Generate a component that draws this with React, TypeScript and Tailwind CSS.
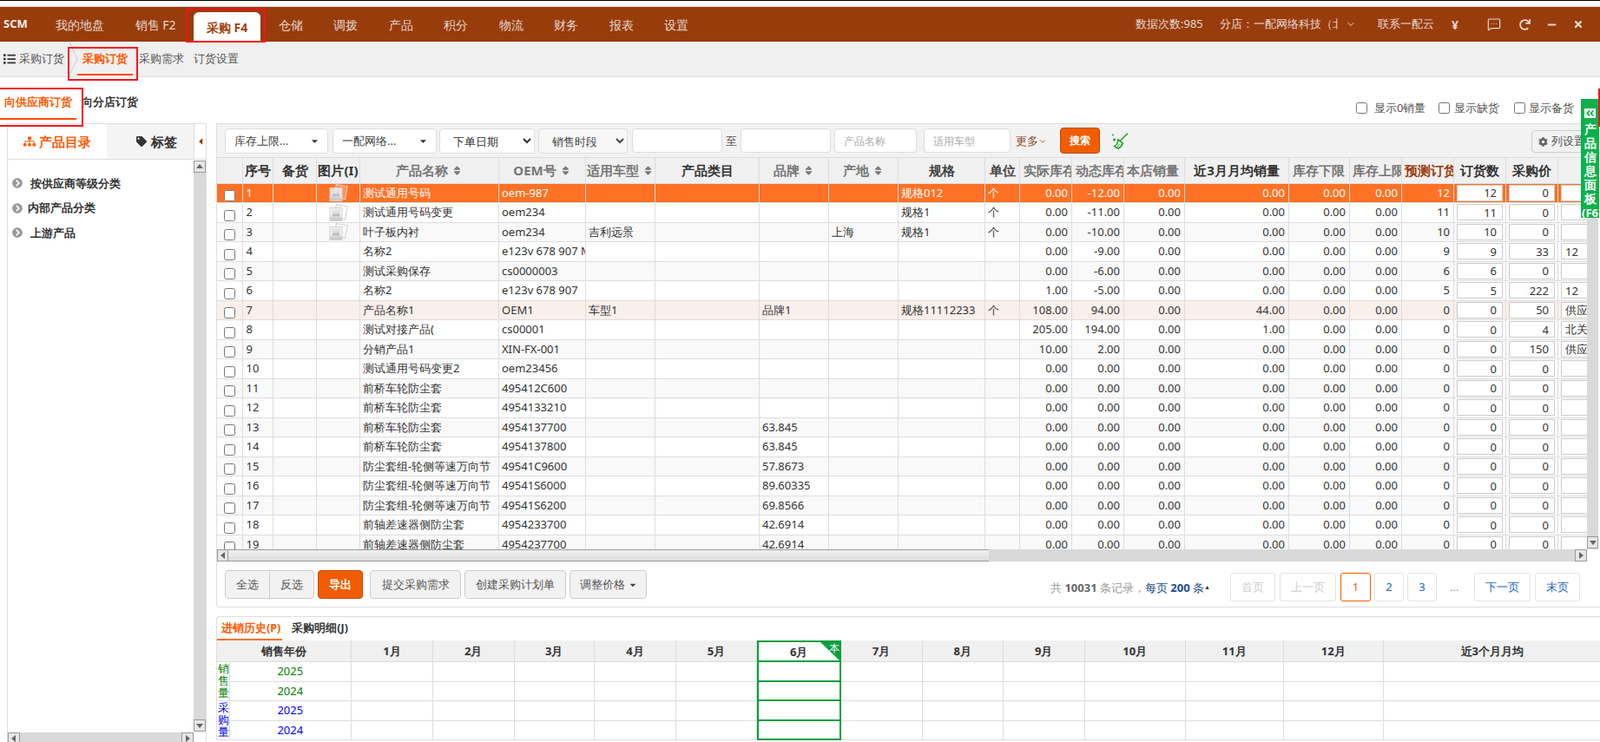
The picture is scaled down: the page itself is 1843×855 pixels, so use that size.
import React from "react";
import { FaCaretDown, FaCaretLeft, FaChevronCircleRight, FaCog, FaList, FaMinus, FaRedo, FaSitemap, FaSort, FaTag, FaTimes, FaAngleDoubleLeft } from "react-icons/fa";
import { ChevronDown, MessageSquareMore } from "lucide-react";

const GRID = "grid w-max grid-cols-[29.5px_35.5px_50px_50px_160px_100px_80px_120px_80px_80px_100px_40px_60px_60px_70px_120px_70px_60px_60px_60px_60px_60px]";
const HIST = "grid grid-cols-[14.5px_140.5px_94px_93.5px_92.5px_94px_93px_96.5px_94px_93.5px_93.5px_116.5px_112.5px_115.5px_249.5px]";

type Row = { name: string; oem?: string; model?: string; brand?: string; origin?: string; spec?: string; unit?: string; actual?: string; dyn?: string; avg?: string; pred?: string; qty?: string; price?: string; extra?: string; img?: boolean };

const rows: Row[] = [
  { name: "测试通用号码", oem: "oem-987", spec: "规格012", unit: "个", dyn: "-12.00", pred: "12", qty: "12", img: true },
  { name: "测试通用号码变更", oem: "oem234", spec: "规格1", unit: "个", dyn: "-11.00", pred: "11", qty: "11", img: true },
  { name: "叶子板内衬", oem: "oem234", model: "吉利远景", origin: "上海", spec: "规格1", unit: "个", dyn: "-10.00", pred: "10", qty: "10", img: true },
  { name: "名称2", oem: "e123v 678 907 M", dyn: "-9.00", pred: "9", qty: "9", price: "33", extra: "12" },
  { name: "测试采购保存", oem: "cs0000003", dyn: "-6.00", pred: "6", qty: "6" },
  { name: "名称2", oem: "e123v 678 907", actual: "1.00", dyn: "-5.00", pred: "5", qty: "5", price: "222", extra: "12" },
  { name: "产品名称1", oem: "OEM1", model: "车型1", brand: "品牌1", spec: "规格11112233", unit: "个", actual: "108.00", dyn: "94.00", avg: "44.00", price: "50", extra: "供应商" },
  { name: "测试对接产品(", oem: "cs00001", actual: "205.00", dyn: "194.00", avg: "1.00", price: "4", extra: "北关区" },
  { name: "分销产品1", oem: "XIN-FX-001", actual: "10.00", dyn: "2.00", price: "150", extra: "供应商" },
  { name: "测试通用号码变更2", oem: "oem23456" },
  { name: "前桥车轮防尘套", oem: "495412C600" },
  { name: "前桥车轮防尘套", oem: "4954133210" },
  { name: "前桥车轮防尘套", oem: "4954137700", brand: "63.845" },
  { name: "前桥车轮防尘套", oem: "4954137800", brand: "63.845" },
  { name: "防尘套组-轮侧等速万向节", oem: "49541C9600", brand: "57.8673" },
  { name: "防尘套组-轮侧等速万向节", oem: "49541S6000", brand: "89.60335" },
  { name: "防尘套组-轮侧等速万向节", oem: "49541S6200", brand: "69.8566" },
  { name: "前轴差速器侧防尘套", oem: "4954233700", brand: "42.6914" },
  { name: "前轴差速器侧防尘套", oem: "4954237700", brand: "42.6914" },
];

const heads: { t: string; sort?: boolean; c: string }[] = [
  { t: "", c: "" },
  { t: "序号", c: "text-center text-[#333]" },
  { t: "备货", c: "text-center text-[#333]" },
  { t: "图片(I)", c: "text-center text-[#333]" },
  { t: "产品名称", sort: true, c: "text-center text-[#777]" },
  { t: "OEM号", sort: true, c: "text-center text-[#777]" },
  { t: "适用车型", sort: true, c: "text-center text-[#777]" },
  { t: "产品类目", c: "text-center text-[#333]" },
  { t: "品牌", sort: true, c: "text-center text-[#777]" },
  { t: "产地", sort: true, c: "text-center text-[#777]" },
  { t: "规格", c: "text-center text-[#444]" },
  { t: "单位", c: "text-center text-[#444]" },
  { t: "实际库存", c: "pl-1 text-left text-[#777]" },
  { t: "动态库存", c: "pl-1 text-left text-[#777]" },
  { t: "本店销量", c: "pl-[3px] text-left text-[#777]" },
  { t: "近3月月均销量", c: "text-center text-[#333]" },
  { t: "库存下限", c: "pl-1 text-left text-[#777]" },
  { t: "库存上限", c: "pl-[3px] text-left text-[#777]" },
  { t: "预测订货", c: "pl-[3px] text-left text-[#9a3c0c]" },
  { t: "订货数", c: "text-center text-[#333]" },
  { t: "采购价", c: "text-center text-[#333]" },
];

const navItems = ["仓储", "调拨", "产品", "积分", "物流", "财务", "报表", "设置"];
const months = ["1月", "2月", "3月", "4月", "5月"];
const months2 = ["7月", "8月", "9月", "10月", "11月", "12月"];

function Arrow({ dir }: { dir: "up" | "down" | "left" | "right" }) {
  const pts = { up: "1,7 9,7 5,2", down: "1,3 9,3 5,8", left: "7,1 7,9 2,5", right: "3,1 3,9 8,5" }[dir];
  return (
    <svg width="10" height="10" viewBox="0 0 10 10">
      <polygon points={pts} fill="#666" />
    </svg>
  );
}

function ScrollBtn({ dir, className }: { dir: "up" | "down" | "left" | "right"; className: string }) {
  return (
    <div className={"absolute flex items-center justify-center border border-[#999] bg-[#e6e6e6] " + className}>
      <Arrow dir={dir} />
    </div>
  );
}

function Pic() {
  return (
    <svg width="23" height="20" viewBox="0 0 23 20">
      <rect x="8" y="1.5" width="13" height="15" transform="rotate(10 14 9)" fill="#ffffff" fillOpacity="0.25" stroke="#d2d2d2" />
      <rect x="2" y="4.5" width="14" height="15" fill="#f2f2f2" fillOpacity="0.8" stroke="#d2d2d2" />
      <rect x="4" y="6.5" width="10" height="8" fill="#e2e2e2" />
      <polygon points="4,14.5 7,10.5 9,12.5 11,10 14,14.5" fill="#bcbcbc" />
      <rect x="2" y="15.5" width="14" height="4" fill="#cccccc" />
    </svg>
  );
}

function Broom() {
  return (
    <svg width="20" height="19" viewBox="0 0 20 19" fill="none" stroke="#22a32e" strokeWidth="1.6" strokeLinecap="round">
      <path d="M18.5 1 L11 8.5" />
      <path d="M8 8 L13.5 12 C12.5 15 10.5 17 8 18 C6.5 17.6 5 16.6 3.8 15.6 C6 14.6 7.5 11.5 8 8 Z" />
      <path d="M9.5 13 L7 16.5" strokeWidth="1" />
      <circle cx="2" cy="2.5" r="1" fill="#22a32e" stroke="none" />
      <circle cx="3.5" cy="8" r="1.6" fill="#22a32e" stroke="none" />
    </svg>
  );
}

function Cell({ children, className = "" }: { children?: React.ReactNode; className?: string }) {
  return <div className={"overflow-hidden whitespace-nowrap border-r border-[#ddd] leading-[21px] " + className}>{children}</div>;
}

function Qty({ v, left }: { v: string; left?: boolean }) {
  return (
    <div className="flex items-center justify-center overflow-hidden border-r border-[#ddd]">
      <input
        readOnly
        value={v}
        className={"h-[19px] border border-[#ccc] bg-white text-[13px] leading-[15px] text-[#333] " + (left ? "ml-[3px] mr-auto w-[56px] pl-1 text-left" : "w-[53px] pr-[6px] text-right")}
      />
    </div>
  );
}

function TableRow({ r, i }: { r: Row; i: number }) {
  const first = i === 0;
  const bg = first ? "bg-[#ff7124] text-white" : i === 6 ? "bg-[#f9efeb] text-[#333]" : i % 2 === 0 ? "bg-[#f9f9f9] text-[#333]" : "bg-white text-[#333]";
  const n = "pr-1 text-right";
  return (
    <div className={GRID + " h-[22.5px] border-b border-[#ddd] text-[13px] " + bg}>
      <div className="flex items-end justify-center overflow-hidden border-r border-[#ddd] pb-px">
        <input type="checkbox" className="h-[13px] w-[13px]" readOnly />
      </div>
      <Cell className="pl-1">{i + 1}</Cell>
      <Cell />
      <div className="flex items-center justify-center overflow-hidden border-r border-[#ddd]">{r.img ? <Pic /> : null}</div>
      <Cell className="pl-[3px]">{r.name}</Cell>
      <Cell className="pl-[3px]">{r.oem}</Cell>
      <Cell className="pl-[3px]">{r.model}</Cell>
      <Cell />
      <Cell className="pl-[3px]">{r.brand}</Cell>
      <Cell className="pl-[3px]">{r.origin}</Cell>
      <Cell className="pl-[3px]">{r.spec}</Cell>
      <Cell className="pl-[3px]">{r.unit}</Cell>
      <Cell className={n}>{r.actual ?? "0.00"}</Cell>
      <Cell className={n}>{r.dyn ?? "0.00"}</Cell>
      <Cell className={n}>0.00</Cell>
      <Cell className={n}>{r.avg ?? "0.00"}</Cell>
      <Cell className={n}>0.00</Cell>
      <Cell className={n}>0.00</Cell>
      <Cell className={n}>{r.pred ?? "0"}</Cell>
      <Qty v={r.qty ?? "0"} />
      <Qty v={r.price ?? "0"} />
      <Qty v={r.extra ?? ""} left />
    </div>
  );
}

function FilterBtn({ label, className }: { label: string; className: string }) {
  return (
    <div className={"relative flex h-[29px] items-center rounded-[4px] border border-[#ddd] bg-white pl-[10px] text-[13px] text-[#444] " + className}>
      {label}
      <FaCaretDown className="absolute right-[9px] top-[8px] text-[#333]" size={11} />
    </div>
  );
}

const footBtn = "flex h-[33px] items-center justify-center border border-[#ccc] bg-[#f2f2f2] text-[13px] text-[#555]";
const pageBtn = "flex h-[33px] items-center justify-center rounded-[3px] border border-[#e4e4e4] bg-white text-[13px]";

function HistRow({ label, color }: { label: string; color: string }) {
  return (
    <>
      <div className={"flex items-center justify-center border-b border-r border-[#ddd] text-[13px] " + color}>{label}</div>
      {months.map((m) => (
        <div key={m} className="border-b border-r border-[#ddd]" />
      ))}
      <div className="border-x-2 border-b-2 border-[#0b9f3e]" />
      {months2.map((m) => (
        <div key={m} className="border-b border-r border-[#ddd]" />
      ))}
      <div className="border-b border-[#ddd]" />
    </>
  );
}

export default function App() {
  return (
    <div className="relative h-[855px] w-[1843px] overflow-hidden bg-white [font-family:'Liberation_Sans','Noto_Sans_CJK_SC',sans-serif]">
      <div className="h-px bg-black" />
      <div className="h-[7px] border-b border-[#ddd] bg-white" />

      {/* top header */}
      <header className="relative flex h-10 items-center bg-[#983c0c] text-[14px] text-[#e4d8cf]">
        <span className="ml-1 w-[60px] text-[13px] font-bold text-[#eee]">SCM</span>
        <div className="flex h-full items-center gap-[35.5px]">
          <span>我的地盘</span>
          <span>销售 F2</span>
          <span className="-mx-[15px] mt-1.5 flex h-[34px] items-center rounded-t-[6px] bg-white px-[15px] font-bold text-[#a0410d]">采购 F4</span>
          {navItems.map((n) => (
            <span key={n}>{n}</span>
          ))}
        </div>
        <div className="absolute left-[1308px] top-0 flex h-full items-center text-[13px]">
          <span className="w-[97px]">数据次数:985</span>
          <span className="w-[136px] overflow-hidden whitespace-nowrap">分店：一配网络科技（北京）</span>
          <ChevronDown size={12} className="ml-[9px]" />
          <span className="ml-[25px]">联系一配云</span>
          <span className="ml-[20px] text-[14px] font-bold">¥</span>
          <MessageSquareMore size={16} strokeWidth={1.8} className="ml-[33px]" />
          <FaRedo size={13} className="ml-[21px]" />
          <FaMinus size={11} className="ml-[19px]" />
          <FaTimes size={12} className="ml-[19px]" />
        </div>
      </header>

      {/* sub nav */}
      <nav className="relative flex h-[41px] items-center border-b border-[#ddd] bg-[#f0f0f0] text-[13px] text-[#555]">
        <FaList size={14} className="ml-1 text-[#333]" />
        <span className="ml-1">采购订货</span>
        <svg width="12" height="41" viewBox="0 0 12 41" className="absolute left-[79px] top-0" fill="none" stroke="#ccc">
          <path d="M0.5 0 L10 20 L0.5 40" />
        </svg>
        <span className="ml-[21px] font-bold text-[#ff5a00]">采购订货</span>
        <span className="ml-[13px]">采购需求</span>
        <span className="ml-[11px]">订货设置</span>
        <div className="absolute left-[89px] top-[37px] h-0.5 w-[64px] bg-[#ff4a00]" />
      </nav>

      {/* sub tabs row */}
      <div className="relative flex h-[53px] items-center text-[12.5px] font-bold">
        <span className="ml-[5px] mt-[5px] text-[#ff5a00]">向供应商订货</span>
        <span className="ml-[11px] mt-[5px] text-[#333]">向分店订货</span>
        <div className="absolute left-0 top-[47px] h-0.5 w-[88px] bg-[#ff4a00]" />
        <div className="absolute left-[1562px] top-[26px] flex items-center text-[13px] font-normal text-[#555]">
          <input type="checkbox" className="h-[13px] w-[13px]" readOnly />
          <span className="ml-2 w-[74px]">显示0销量</span>
          <input type="checkbox" className="h-[13px] w-[13px]" readOnly />
          <span className="ml-[5px] w-[69px]">显示缺货</span>
          <input type="checkbox" className="h-[13px] w-[13px]" readOnly />
          <span className="ml-[4px]">显示备货</span>
        </div>
      </div>

      <div className="flex h-[713px]">
        {/* left panel */}
        <aside className="relative ml-2 h-full w-[230px] border-l border-r border-t border-[#ddd]">
          <div className="flex h-[41px] border-b border-[#ddd]">
            <div className="flex w-[114px] items-center pl-[18px] text-[15px] font-bold text-[#ff5a00]">
              <FaSitemap size={14} />
              <span className="ml-1">产品目录</span>
            </div>
            <div className="flex w-[100px] items-center bg-[#f4f4f4] pl-[34px] text-[15px] font-bold text-[#333]">
              <FaTag size={12} />
              <span className="ml-[5px]">标签</span>
            </div>
            <div className="flex flex-1 items-center justify-center border-l border-[#ddd]">
              <FaCaretLeft size={12} className="text-[#983c0c]" />
            </div>
          </div>
          <div className="absolute bottom-[12px] right-0 top-[42px] w-[14px] bg-[#d9d9d9]" />
          <ScrollBtn dir="up" className="right-0 top-[42px] h-[14px] w-[14px]" />
          <ScrollBtn dir="down" className="bottom-[12px] right-0 h-[14px] w-[14px]" />
          <div className="pl-[5px] pt-[13px] text-[13px] font-bold text-[#333]">
            <div className="flex h-[28.5px] items-center">
              <FaChevronCircleRight size={12} className="text-[#999]" />
              <span className="ml-[9px]">按供应商等级分类</span>
            </div>
            <div className="flex h-[28.5px] items-center">
              <FaChevronCircleRight size={12} className="text-[#999]" />
              <span className="ml-[6px]">内部产品分类</span>
            </div>
            <div className="flex h-[28.5px] items-center">
              <FaChevronCircleRight size={12} className="text-[#999]" />
              <span className="ml-[9px]">上游产品</span>
            </div>
          </div>
          <div className="absolute bottom-0 left-0 h-[11px] w-[214px] bg-[#d9d9d9]" />
          <ScrollBtn dir="left" className="bottom-[-2px] left-0 h-[13px] w-[14px]" />
          <ScrollBtn dir="right" className="bottom-[-2px] left-[200px] h-[13px] w-[14px]" />
        </aside>

        {/* main */}
        <main className="relative ml-[11px] w-[1594px]">
          <div className="relative rounded-bl-[4px] border-b border-l border-t border-[#ddd]">
            {/* filter bar */}
            <div className="flex h-[38px] items-start bg-[#f2f2f2] pl-[9px] pt-[5px] text-[13px] text-[#444]">
              <FilterBtn label="库存上限..." className="w-[119px]" />
              <FilterBtn label="一配网络..." className="ml-[5px] w-[120px]" />
              <select className="ml-[3px] h-[29px] w-[110px] rounded-[4px] border border-[#ddd] bg-white pl-[11px] text-[13px] text-[#333]">
                <option>下单日期</option>
              </select>
              <select className="ml-1 h-[29px] w-[103px] rounded-[4px] border border-[#ddd] bg-[#f7f7f7] pl-[11px] text-[13px] text-[#444]">
                <option>销售时段</option>
              </select>
              <input readOnly className="ml-[5px] h-[28px] w-[104px] rounded-[4px] border border-[#ddd] bg-white" />
              <span className="ml-1 mt-[5px] w-[17px] text-[#555]">至</span>
              <input readOnly className="h-[28px] w-[104px] rounded-[4px] border border-[#ddd] bg-white" />
              <input readOnly placeholder="产品名称" className="ml-1 h-[28px] w-[95px] rounded-[4px] border border-[#ddd] bg-white pl-[10px] text-[12px] placeholder:text-[#aaa]" />
              <input readOnly placeholder="适用车型" className="ml-2 h-[28px] w-[100px] rounded-[4px] border border-[#ddd] bg-white pl-[10px] text-[12px] placeholder:text-[#aaa]" />
              <span className="ml-[6px] mt-[5px] flex items-center text-[#8a4b1f]">
                更多
                <ChevronDown size={10} />
              </span>
              <button className="ml-[15px] mt-[-1px] h-[30px] w-[46px] rounded-[4px] border border-[#c14a00] bg-[#f25c00] text-[12px] font-bold text-white">搜索</button>
              <span className="ml-[13px] mt-[5px]">
                <Broom />
              </span>
              <div className="absolute left-[1514px] top-[7px] flex h-[26px] w-[90px] items-center rounded-[4px] border border-[#ccc] bg-[#f2f2f2] pl-[7px] text-[13px] text-[#555]">
                <FaCog size={11} className="text-[#666]" />
                <span className="ml-1">列设置</span>
              </div>
            </div>

            {/* data table */}
            <div className="relative h-[452px] overflow-hidden">
              <div className={GRID + " h-[30.5px] border-y border-[#ddd] bg-[#f0f0f0] text-[15px] font-bold"}>
                {heads.map((h, i) => (
                  <div key={i} className={"overflow-hidden whitespace-nowrap border-r border-[#ddd] leading-[28px] " + h.c}>
                    {h.t}
                    {h.sort ? <FaSort size={13} className="ml-1 inline-block align-[-1px] text-[#777]" /> : null}
                  </div>
                ))}
                <div className="border-r border-[#ddd]" />
              </div>
              {rows.map((r, i) => (
                <TableRow key={i} r={r} i={i} />
              ))}
              <div className="absolute bottom-0 left-[1578px] top-0 w-[13px] bg-[#d9d9d9]" />
              <ScrollBtn dir="down" className="bottom-px left-[1578px] h-[14px] w-[13px]" />
              <div className="absolute bottom-0 left-[1591px] top-0 w-[3px] bg-white" />
            </div>

            {/* horizontal scrollbar */}
            <div className="relative h-[14px] w-[1578px] bg-[#d9d9d9]">
              <div className="absolute bottom-0 left-[13px] top-0 w-[876px] border-y border-[#999] bg-[linear-gradient(#f0f0f0,#dcdcdc)]" />
              <ScrollBtn dir="left" className="bottom-0 left-0 top-0 w-[13px]" />
              <ScrollBtn dir="right" className="bottom-0 right-0 top-0 w-[14px]" />
            </div>

            {/* footer actions */}
            <div className="relative flex h-[52px] items-start pl-[9px] pt-[10px]">
              <div className={footBtn + " w-[52px] rounded-l-[4px]"}>全选</div>
              <div className={footBtn + " -ml-px w-[52px] rounded-r-[4px]"}>反选</div>
              <div className="ml-[4px] flex h-[33px] w-[52px] items-center justify-center rounded-[4px] border border-[#c14a00] bg-[#f25c00] text-[13px] font-bold text-white">导出</div>
              <div className={footBtn + " ml-[8px] w-[105px] rounded-[4px]"}>提交采购需求</div>
              <div className={footBtn + " ml-[4px] w-[117px] rounded-[4px]"}>创建采购计划单</div>
              <div className={footBtn + " ml-[4px] w-[89px] rounded-[4px]"}>
                调整价格
                <FaCaretDown size={10} className="ml-1 text-[#444]" />
              </div>
              <div className="absolute left-[960px] top-[22px] flex items-center text-[13px] leading-[16px]">
                <span className="text-[#999]">共 <b className="text-[#666]">10031</b> 条记录，</span>
                <span className="text-[#1e4d8c]">每页 <b>200</b> 条</span>
                <span className="text-[7px] text-[#333]">▲</span>
              </div>
              <div className={pageBtn + " absolute left-[1167px] top-[13px] w-[52px] text-[#ccc]"}>首页</div>
              <div className={pageBtn + " absolute left-[1224px] top-[13px] w-[65px] text-[#ccc]"}>上一页</div>
              <div className={pageBtn + " absolute left-[1294px] top-[13px] w-[35px] border-[#f25c00] text-[#f25c00]"}>1</div>
              <div className={pageBtn + " absolute left-[1333px] top-[13px] w-[34px] text-[#1a66cc]"}>2</div>
              <div className={pageBtn + " absolute left-[1371px] top-[13px] w-[34px] text-[#1a66cc]"}>3</div>
              <div className="absolute left-[1420px] top-[20px] text-[13px] text-[#999]">...</div>
              <div className={pageBtn + " absolute left-[1448px] top-[13px] w-[65px] text-[#1a66cc]"}>下一页</div>
              <div className={pageBtn + " absolute left-[1518px] top-[13px] w-[52px] text-[#1a66cc]"}>末页</div>
            </div>
          </div>

          {/* history panel */}
          <div className="relative mt-[10px] rounded-tl-[4px] border-l border-t border-[#ddd]">
            <div className="flex h-[27px] items-center text-[12.5px] font-bold">
              <span className="ml-[5px] text-[#ff5a00]">进销历史(P)</span>
              <span className="ml-[13px] text-[#333]">采购明细(J)</span>
              <div className="absolute left-0 top-[25px] h-0.5 w-[75px] bg-[#ff7124]" />
            </div>
            <div className={HIST + " grid-rows-[25px_22.5px_22.5px_22.5px_22.5px] text-[13px]"}>
              <div className="col-span-2 border-b border-r border-[#ddd] bg-[#f0f0f0] text-center font-bold leading-[24px] text-[#333]">销售年份</div>
              {months.map((m) => (
                <div key={m} className="border-b border-r border-[#ddd] bg-[#f0f0f0] text-center font-bold leading-[24px] text-[#333]">{m}</div>
              ))}
              <div className="relative border-2 border-[#0b9f3e] bg-white text-center font-bold leading-[22px] text-[#333]">
                6月
                <svg width="26" height="25" viewBox="0 0 26 25" className="absolute -right-[2px] -top-[2px]">
                  <polygon points="0,0 26,0 26,25" fill="#0b9f3e" />
                </svg>
                <span className="absolute right-0 top-[-1px] text-[12px] font-normal leading-[16px] text-white">本</span>
              </div>
              {months2.map((m) => (
                <div key={m} className="border-b border-r border-[#ddd] bg-[#f0f0f0] text-center font-bold leading-[24px] text-[#333]">{m}</div>
              ))}
              <div className="border-b border-[#ddd] bg-[#f0f0f0] text-center font-bold leading-[24px] text-[#333]">近3个月月均</div>

              <div className="row-span-2 w-[14.5px] overflow-hidden border-b border-r border-[#ddd] pl-px text-[13px] leading-[14px] text-[#008000] [word-break:break-all]">销售量</div>
              <HistRow label="2025" color="text-[#008000]" />
              <HistRow label="2024" color="text-[#008000]" />
              <div className="row-span-2 w-[14.5px] overflow-hidden border-b border-r border-[#ddd] pl-px text-[13px] leading-[14px] text-[#0000ff] [word-break:break-all]">采购量</div>
              <HistRow label="2025" color="text-[#0000ff]" />
              <HistRow label="2024" color="text-[#0000ff]" />
            </div>
          </div>
        </main>
      </div>

      {/* green side tab */}
      <div className="absolute left-[1821px] top-[114px] flex h-[137px] w-[21px] flex-col items-center bg-[#0cb14b] text-[14px] font-bold leading-[16px] text-white">
        <div className="mt-[11px] flex h-[12px] w-[13px] items-center justify-center bg-white text-[#0cb14b]">
          <FaAngleDoubleLeft size={11} />
        </div>
        <div className="mt-[5px] w-[14px] [word-break:break-all]">产品信息面板</div>
        <div className="w-[21px] overflow-hidden whitespace-nowrap pl-px text-[13px]">(F6)</div>
      </div>

      {/* red annotation boxes */}
      <div className="absolute left-[214px] top-[10px] h-[39px] w-[92px] border-2 border-[#f5141e]" />
      <div className="absolute left-[78px] top-[54px] h-[39px] w-[81px] border-2 border-[#f5141e]" />
      <div className="absolute left-[-2px] top-[101px] h-[45px] w-[98px] border-2 border-[#f5141e]" />
      <div className="absolute left-[1841px] top-[102px] h-[44px] w-[4px] border-2 border-[#f5141e]" />
    </div>
  );
}
